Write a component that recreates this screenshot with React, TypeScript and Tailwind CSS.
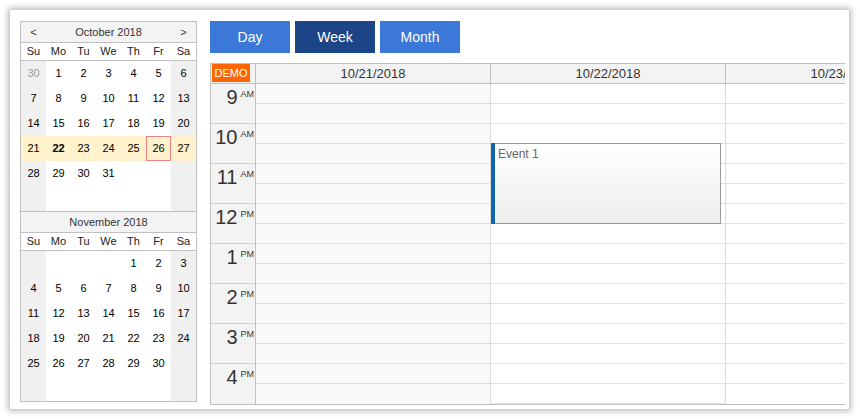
import React from 'react';

type Day = { d: number; other?: boolean } | null;

const week = (nums: number[]): Day[] => nums.map(n => (n === 0 ? null : { d: n }));

const october: Day[][] = [
  [{ d: 30, other: true }, ...week([1, 2, 3, 4, 5, 6])],
  week([7, 8, 9, 10, 11, 12, 13]),
  week([14, 15, 16, 17, 18, 19, 20]),
  week([21, 22, 23, 24, 25, 26, 27]),
  week([28, 29, 30, 31, 0, 0, 0]),
  week([0, 0, 0, 0, 0, 0, 0]),
];

const november: Day[][] = [
  week([0, 0, 0, 0, 1, 2, 3]),
  week([4, 5, 6, 7, 8, 9, 10]),
  week([11, 12, 13, 14, 15, 16, 17]),
  week([18, 19, 20, 21, 22, 23, 24]),
  week([25, 26, 27, 28, 29, 30, 0]),
  week([0, 0, 0, 0, 0, 0, 0]),
];

const dayNames = ['Su', 'Mo', 'Tu', 'We', 'Th', 'Fr', 'Sa'];

interface MonthProps {
  title: string;
  weeks: Day[][];
  arrows?: boolean;
  highlightRow?: number;
  selected?: number;
  today?: number;
  first?: boolean;
}

const Month: React.FC<MonthProps> = ({ title, weeks, arrows, highlightRow, selected, today, first }) => (
  <div className={first ? '' : 'border-t border-[#c0c0c0]'}>
    {/* Title */}
    <div className="flex h-[21px] items-center bg-[#f3f3f3] border-b border-[#c0c0c0] text-[11px] text-[#333]">
      <div className="w-[25px] text-center">{arrows ? '<' : ''}</div>
      <div className="flex-1 text-center">{title}</div>
      <div className="w-[25px] text-center">{arrows ? '>' : ''}</div>
    </div>
    {/* Day names */}
    <div className="flex h-[18px] items-center border-b border-[#c0c0c0] bg-white text-[11px] text-[#222]">
      {dayNames.map(n => (
        <div key={n} className="w-[25px] text-center">{n}</div>
      ))}
    </div>
    {/* Days */}
    {weeks.map((row, ri) => (
      <div key={ri} className="flex h-[25px]">
        {row.map((cell, ci) => {
          const weekend = ci === 0 || ci === 6;
          const hl = ri === highlightRow;
          const isSel = cell && !cell.other && cell.d === selected && hl;
          const isToday = cell && !cell.other && cell.d === today && hl;
          return (
            <div
              key={ci}
              className={[
                'w-[25px] h-[25px] flex items-center justify-center text-[11px]',
                hl ? 'bg-[#fff2cc]' : weekend ? 'bg-[#f0f0f0]' : 'bg-white',
                isSel ? 'border border-[#ee8080]' : '',
                isToday ? 'font-bold' : '',
                cell?.other ? 'text-[#999]' : 'text-black',
              ].join(' ')}
            >
              {cell ? cell.d : ''}
            </div>
          );
        })}
      </div>
    ))}
  </div>
);

const hours = [
  { h: '9', s: 'AM' },
  { h: '10', s: 'AM' },
  { h: '11', s: 'AM' },
  { h: '12', s: 'PM' },
  { h: '1', s: 'PM' },
  { h: '2', s: 'PM' },
  { h: '3', s: 'PM' },
  { h: '4', s: 'PM' },
];

const columns = ['10/21/2018', '10/22/2018', '10/23/2018'];
const slots = Array.from({ length: 16 }, (_, i) => i);

export default function App() {
  return (
    <div className="w-[860px] h-[419px] bg-white p-[10px] font-['Liberation_Sans',Arial,sans-serif]">
      <div className="w-[839px] h-[399px] bg-white shadow-[0_0_6px_2px_rgba(0,0,0,0.28)] flex pt-[11px] pl-[10px]">
        {/* Navigator */}
        <div className="w-[177px] self-start border border-[#c0c0c0]">
          <Month title="October 2018" weeks={october} arrows highlightRow={3} selected={26} today={22} first />
          <Month title="November 2018" weeks={november} />
        </div>

        {/* Main */}
        <div className="ml-[13px] w-[635px] flex flex-col">
          <div className="flex gap-[5px]">
            <button className="w-[80px] h-[32px] bg-[#3c78d8] text-white text-[14px]">Day</button>
            <button className="w-[80px] h-[32px] bg-[#1c4587] text-white text-[14px]">Week</button>
            <button className="w-[80px] h-[32px] bg-[#3c78d8] text-white text-[14px]">Month</button>
          </div>

          <div className="mt-[10px] w-[635px] overflow-hidden border-t border-l border-b border-[#c0c0c0]">
            {/* Header */}
            <div className="flex h-[20px] bg-[#f3f3f3] border-b border-[#c0c0c0]">
              <div className="w-[45px] shrink-0 border-r border-[#c0c0c0]">
                <div className="ml-[1px] w-[38px] h-[18px] bg-[#ff6600] text-white text-[11px] leading-[18px] text-center">
                  DEMO
                </div>
              </div>
              {columns.map(c => (
                <div
                  key={c}
                  className="w-[235px] shrink-0 border-r border-[#c0c0c0] text-center text-[13px] leading-[19px] text-[#333]"
                >
                  {c}
                </div>
              ))}
            </div>

            {/* Body */}
            <div className="flex">
              <div className="w-[45px] shrink-0 bg-[#f3f3f3] border-r border-[#c0c0c0]">
                {hours.map(h => (
                  <div
                    key={h.h}
                    className="h-[40px] flex justify-end items-start pr-[1px] border-b border-[#d0d0d0] last:border-b-0 text-[#333]"
                  >
                    <span className="pt-[3px] text-[20px] leading-none">{h.h}</span>
                    <span className="mt-[6px] ml-[3px] text-[9px] leading-none">{h.s}</span>
                  </div>
                ))}
              </div>
              {columns.map((c, ci) => (
                <div
                  key={c}
                  className={[
                    'relative w-[235px] shrink-0 border-r border-[#dcdcdc]',
                    ci === 0 ? 'bg-[#f9f9f9]' : 'bg-white',
                  ].join(' ')}
                >
                  {slots.map(s => (
                    <div key={s} className="h-[20px] border-b border-[#e0e0e0] last:border-b-0" />
                  ))}
                  {ci === 1 && (
                    <div className="absolute left-0 top-[59px] w-[230px] h-[81px] flex border border-[#999] bg-gradient-to-b from-white to-[#eeeeee]">
                      <div className="w-[4px] -ml-[1px] -my-[1px] bg-[#1066a8]" />
                      <div className="pl-[3px] pt-[3px] text-[12px] leading-[14px] text-[#666]">Event 1</div>
                    </div>
                  )}
                </div>
              ))}
            </div>
          </div>
        </div>
      </div>
    </div>
  );
}
